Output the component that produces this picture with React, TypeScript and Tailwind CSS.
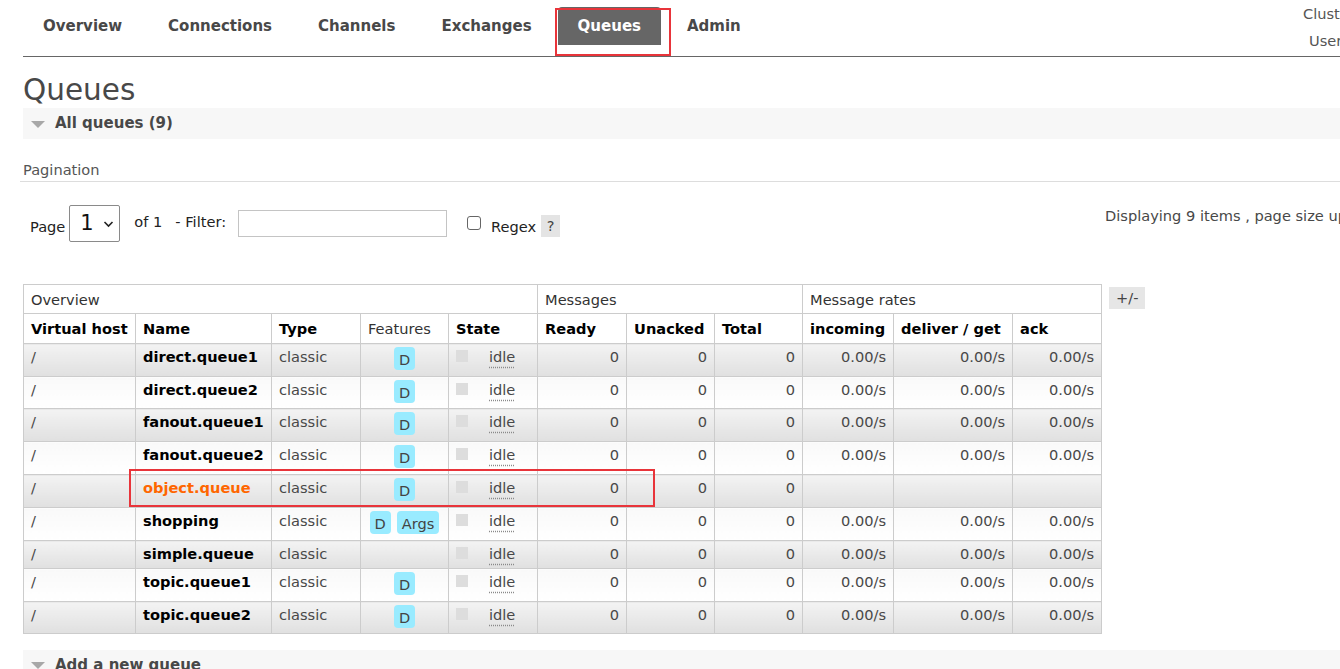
import React from 'react';

type Row = { name: string; feats: string[]; rates: boolean; highlight?: boolean; h: number };

const rows: Row[] = [
  { name: 'direct.queue1', feats: ['D'], rates: true, h: 33 },
  { name: 'direct.queue2', feats: ['D'], rates: true, h: 32 },
  { name: 'fanout.queue1', feats: ['D'], rates: true, h: 33 },
  { name: 'fanout.queue2', feats: ['D'], rates: true, h: 33 },
  { name: 'object.queue', feats: ['D'], rates: false, highlight: true, h: 33 },
  { name: 'shopping', feats: ['D', 'Args'], rates: true, h: 33 },
  { name: 'simple.queue', feats: [], rates: true, h: 28 },
  { name: 'topic.queue1', feats: ['D'], rates: true, h: 33 },
  { name: 'topic.queue2', feats: ['D'], rates: true, h: 32 },
];

const navItems = ['Overview', 'Connections', 'Channels', 'Exchanges', 'Queues', 'Admin'];

function Triangle() {
  return (
    <div className="w-0 h-0 border-l-[7px] border-r-[7px] border-t-[7px] border-l-transparent border-r-transparent border-t-[#a8a8a8]" />
  );
}

export default function App() {
  const cell = 'border border-[#cccccc] px-[7px] align-top leading-[20px]';
  return (
    <div
      className="relative w-[1340px] h-[669px] overflow-hidden bg-white text-[#484848] text-[14.6px]"
      style={{ fontFamily: '"DejaVu Sans", Verdana, sans-serif' }}
    >
      {/* header */}
      <div className="flex items-start h-[57px] ml-[23px] border-b border-[#666666]">
        <ul className="flex gap-[6px] mt-[7px]">
          {navItems.map((n) => (
            <li
              key={n}
              className={
                'px-[20px] h-[38px] flex items-center font-bold text-[15px] rounded-t-[4px] ' +
                (n === 'Queues' ? 'bg-[#666666] text-white' : 'text-[#484848]')
              }
            >
              {n}
            </li>
          ))}
        </ul>
        <div className="ml-auto w-[37px] whitespace-nowrap text-[#555555] leading-[20px]">
          <div className="mt-[4px]">Cluster rabbit@localhost</div>
          <div className="mt-[7px] ml-[6px]">User guest</div>
        </div>
      </div>

      {/* content */}
      <div className="ml-[23px]">
        <h1 className="text-[29.5px] leading-[36px] mt-[15px] text-[#484848]">Queues</h1>
        <div className="h-[31px] bg-[#f7f7f7] flex items-center">
          <div className="ml-[8px] mt-[2px]">
            <Triangle />
          </div>
          <span className="ml-[10px] font-bold text-[15px]">All queues (9)</span>
        </div>

        <div className="mt-[21px] leading-[20px] text-[#555555]">Pagination</div>
        <div className="-ml-[3px] mt-[1px] border-b border-[#dddddd]" />

        <div className="flex items-start mt-[23px] h-[79px]">
          <span className="ml-[7px] mt-[12px] leading-[20px] text-[#222222]">Page</span>
          <div className="ml-[4px] w-[51px] h-[37px] border border-[#8a8a8a] rounded-[2px] flex items-center text-[#111111]">
            <span className="ml-[10px] text-[21px] leading-none">1</span>
            <svg className="ml-[9px]" width="11" height="8" viewBox="0 0 11 8">
              <path d="M1.5 2 L5.5 6 L9.5 2" stroke="#222" strokeWidth="1.6" fill="none" />
            </svg>
          </div>
          <span className="ml-[14px] mt-[7px] leading-[20px] text-[#222222]">of 1</span>
          <span className="ml-[13px] mt-[7px] leading-[20px] text-[#222222]">- Filter:</span>
          <div className="ml-[12px] mt-[5px] w-[209px] h-[27px] border border-[#c4c4c4] bg-white" />
          <div className="ml-[20px] mt-[11px] w-[14px] h-[14px] border border-[#666666] rounded-[3px] bg-white" />
          <span className="ml-[10px] mt-[12px] leading-[20px] text-[#222222]">Regex</span>
          <span className="ml-[5px] mt-[10px] w-[19px] h-[22px] bg-[#e4e4e4] flex items-center justify-center text-[#444444]">?</span>
          <div className="ml-auto w-[235px] whitespace-nowrap mt-[1px] leading-[20px] text-[#484848]">
            Displaying 9 items , page size up to: 100
          </div>
        </div>

        <div className="flex items-start">
          <table className="table-fixed border-collapse w-[1078px]">
            <colgroup>
              <col className="w-[112px]" />
              <col className="w-[136px]" />
              <col className="w-[89px]" />
              <col className="w-[88px]" />
              <col className="w-[89px]" />
              <col className="w-[89px]" />
              <col className="w-[88px]" />
              <col className="w-[88px]" />
              <col className="w-[91px]" />
              <col className="w-[119px]" />
              <col className="w-[89px]" />
            </colgroup>
            <thead>
              <tr className="h-[29px] bg-white">
                <th colSpan={5} className={cell + ' text-left font-normal pt-[5px] text-[#333333]'}>Overview</th>
                <th colSpan={3} className={cell + ' text-left font-normal pt-[5px] text-[#333333]'}>Messages</th>
                <th colSpan={3} className={cell + ' text-left font-normal pt-[5px] text-[#333333]'}>Message rates</th>
              </tr>
              <tr className="h-[30px] bg-white">
                {['Virtual host', 'Name', 'Type', 'Features', 'State', 'Ready', 'Unacked', 'Total', 'incoming', 'deliver / get', 'ack'].map((h) => (
                  <th
                    key={h}
                    className={
                      cell +
                      ' text-left pt-[5px] whitespace-nowrap ' +
                      (h === 'Features' ? 'font-normal text-[#333333]' : 'font-bold text-black')
                    }
                  >
                    {h}
                  </th>
                ))}
              </tr>
            </thead>
            <tbody>
              {rows.map((r, i) => {
                const bg =
                  i % 2 === 0
                    ? ' bg-linear-to-b from-[#f3f3f3] to-[#e0e0e0]'
                    : ' bg-linear-to-b from-[#f9f9f9] to-[#ffffff]';
                const c = cell + ' pt-[3px]' + bg;
                return (
                  <tr key={r.name} style={{ height: r.h }}>
                    <td className={c}>/</td>
                    <td className={c + ' font-bold ' + (r.highlight ? 'text-[#ff6600]' : 'text-black')}>{r.name}</td>
                    <td className={c}>classic</td>
                    <td className={c + ' text-center'}>
                      <div className="flex justify-center gap-[6px]">
                        {r.feats.map((f) => (
                          <span
                            key={f}
                            className="inline-block bg-[#99ebff] rounded-[4px] px-[5px] h-[23px] leading-[25px] text-[#444444]"
                          >
                            {f}
                          </span>
                        ))}
                      </div>
                    </td>
                    <td className={c}>
                      <div className="flex items-start">
                        <span className="mt-[3px] w-[12px] h-[12px] bg-[#dddddd]" />
                        <span className="ml-[21px] underline decoration-dotted decoration-[#8a8a8a] underline-offset-[5px]">
                          idle
                        </span>
                      </div>
                    </td>
                    <td className={c + ' text-right'}>0</td>
                    <td className={c + ' text-right'}>0</td>
                    <td className={c + ' text-right'}>0</td>
                    <td className={c + ' text-right'}>{r.rates ? '0.00/s' : ''}</td>
                    <td className={c + ' text-right'}>{r.rates ? '0.00/s' : ''}</td>
                    <td className={c + ' text-right'}>{r.rates ? '0.00/s' : ''}</td>
                  </tr>
                );
              })}
            </tbody>
          </table>
          <span className="ml-[7px] mt-[3px] px-[7px] h-[22px] leading-[22px] bg-[#e6e6e6] text-[#444444] whitespace-nowrap">+/-</span>
        </div>

        <div className="mt-[16px] h-[40px] bg-[#f7f7f7] flex items-start">
          <div className="ml-[8px] mt-[12px]">
            <Triangle />
          </div>
          <span className="ml-[10px] mt-[5px] font-bold text-[15px] leading-[20px]">Add a new queue</span>
        </div>
      </div>

      {/* annotation boxes */}
      <div className="absolute left-[555px] top-[8px] w-[116px] h-[48px] border-2 border-[#e8343a]" />
      <div className="absolute left-[129px] top-[469px] w-[526px] h-[38px] border-2 border-[#e8343a]" />
    </div>
  );
}
